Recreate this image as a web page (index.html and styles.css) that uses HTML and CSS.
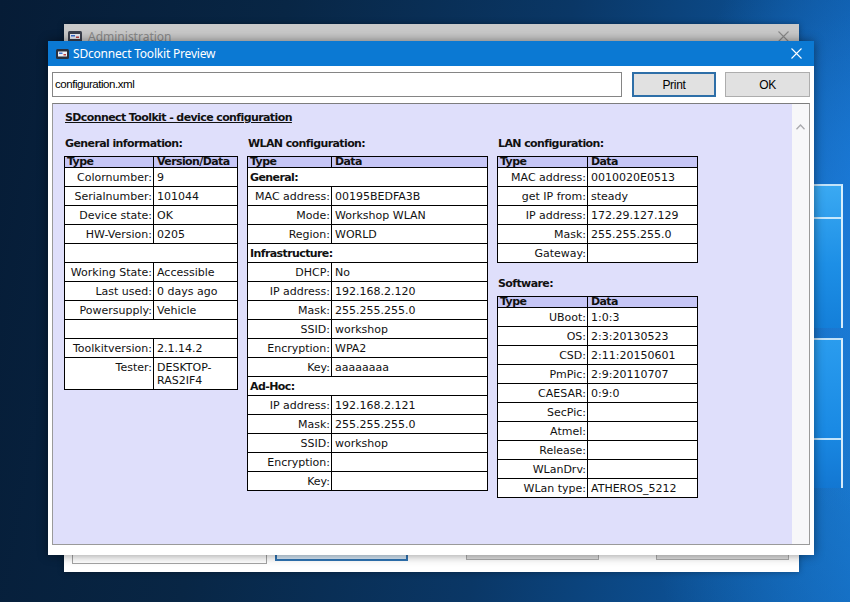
FILE: index.html
```html
<!DOCTYPE html>
<html>
<head>
<meta charset="utf-8">
<title>SDconnect Toolkit Preview</title>
<link rel="stylesheet" href="styles.css">
</head>
<body>
<div class="desktop">
  <div class="logo-pane pane-top"></div>
  <div class="logo-pane pane-bottom"></div>

  <div class="win win-back">
    <div class="titlebar back-bar">
      <svg class="app-icon" width="14" height="11" viewBox="0 0 14 11"><rect x="0" y="0" width="14" height="11" rx="1.5" fill="#3a3f4c"/><rect x="2" y="3" width="10" height="5" fill="#e8ecf4"/><rect x="3" y="4" width="4" height="1.5" fill="#3d6fd0"/><rect x="8" y="5.5" width="3" height="1.5" fill="#c04040"/></svg>
      <span class="title-text">Administration</span>
      <svg class="close" width="11" height="11" viewBox="0 0 11 11"><path d="M0.5 0.5 L10.5 10.5 M10.5 0.5 L0.5 10.5" stroke="#8a8a8a" stroke-width="1.1"/></svg>
    </div>
    <div class="back-body">
      <div class="back-row">
        <div class="back-input"></div>
        <div class="back-btn back-btn-focus"></div>
        <div class="back-btn back-btn-3"></div>
        <div class="back-btn back-btn-4"></div>
      </div>
    </div>
  </div>

  <div class="win win-front">
    <div class="titlebar front-bar">
      <svg class="app-icon" width="13" height="10" viewBox="0 0 13 10"><rect x="0" y="0" width="13" height="10" rx="1.5" fill="#2a2f3c"/><rect x="2" y="2.5" width="9" height="5" fill="#eef1f6"/><rect x="3" y="3.5" width="3.5" height="1.5" fill="#3d6fd0"/><rect x="7.5" y="5" width="2.5" height="1.5" fill="#c04040"/></svg>
      <span class="title-text">SDconnect Toolkit Preview</span>
      <svg class="close" width="11" height="11" viewBox="0 0 11 11"><path d="M0.5 0.5 L10.5 10.5 M10.5 0.5 L0.5 10.5" stroke="#ffffff" stroke-width="1.1"/></svg>
    </div>
    <div class="toolbar">
      <div class="filebox">configuration.xml</div>
      <div class="btn btn-focus">Print</div>
      <div class="btn btn-ok">OK</div>
    </div>
    <div class="viewer">
      <div class="page">
        <div class="doc-title">SDconnect Toolkit - device configuration</div>
        <div class="columns">
          <div class="col col-gen">
            <div class="sec-title">General information:</div>
            <table class="tbl">
              <colgroup><col class="c-89"><col></colgroup>
              <tr class="head"><th>Type</th><th class="th-data">Version/Data</th></tr>
              <tr><td class="lbl">Colornumber:</td><td>9</td></tr>
              <tr><td class="lbl">Serialnumber:</td><td>101044</td></tr>
              <tr><td class="lbl">Device state:</td><td>OK</td></tr>
              <tr><td class="lbl">HW-Version:</td><td>0205</td></tr>
              <tr><td class="empty" colspan="2"></td></tr>
              <tr><td class="lbl">Working State:</td><td>Accessible</td></tr>
              <tr><td class="lbl">Last used:</td><td>0 days ago</td></tr>
              <tr><td class="lbl">Powersupply:</td><td>Vehicle</td></tr>
              <tr><td class="empty" colspan="2"></td></tr>
              <tr><td class="lbl">Toolkitversion:</td><td>2.1.14.2</td></tr>
              <tr><td class="lbl">Tester:</td><td>DESKTOP-<br>RAS2IF4</td></tr>
            </table>
          </div>
          <div class="col col-wlan">
            <div class="sec-title">WLAN configuration:</div>
            <table class="tbl">
              <colgroup><col class="c-84"><col></colgroup>
              <tr class="head"><th>Type</th><th class="th-data">Data</th></tr>
              <tr><td class="grp" colspan="2">General:</td></tr>
              <tr><td class="lbl">MAC address:</td><td>00195BEDFA3B</td></tr>
              <tr><td class="lbl">Mode:</td><td>Workshop WLAN</td></tr>
              <tr><td class="lbl">Region:</td><td>WORLD</td></tr>
              <tr><td class="grp" colspan="2">Infrastructure:</td></tr>
              <tr><td class="lbl">DHCP:</td><td>No</td></tr>
              <tr><td class="lbl">IP address:</td><td>192.168.2.120</td></tr>
              <tr><td class="lbl">Mask:</td><td>255.255.255.0</td></tr>
              <tr><td class="lbl">SSID:</td><td>workshop</td></tr>
              <tr><td class="lbl">Encryption:</td><td>WPA2</td></tr>
              <tr><td class="lbl">Key:</td><td>aaaaaaaa</td></tr>
              <tr><td class="grp" colspan="2">Ad-Hoc:</td></tr>
              <tr><td class="lbl">IP address:</td><td>192.168.2.121</td></tr>
              <tr><td class="lbl">Mask:</td><td>255.255.255.0</td></tr>
              <tr><td class="lbl">SSID:</td><td>workshop</td></tr>
              <tr><td class="lbl">Encryption:</td><td></td></tr>
              <tr><td class="lbl">Key:</td><td></td></tr>
            </table>
          </div>
          <div class="col col-lan">
            <div class="sec-title">LAN configuration:</div>
            <table class="tbl">
              <colgroup><col class="c-90"><col></colgroup>
              <tr class="head"><th>Type</th><th class="th-data">Data</th></tr>
              <tr><td class="lbl">MAC address:</td><td>0010020E0513</td></tr>
              <tr><td class="lbl">get IP from:</td><td>steady</td></tr>
              <tr><td class="lbl">IP address:</td><td>172.29.127.129</td></tr>
              <tr><td class="lbl">Mask:</td><td>255.255.255.0</td></tr>
              <tr><td class="lbl">Gateway:</td><td></td></tr>
            </table>
            <div class="sec-title sec-soft">Software:</div>
            <table class="tbl">
              <colgroup><col class="c-90"><col></colgroup>
              <tr class="head"><th>Type</th><th class="th-data">Data</th></tr>
              <tr><td class="lbl">UBoot:</td><td>1:0:3</td></tr>
              <tr><td class="lbl">OS:</td><td>2:3:20130523</td></tr>
              <tr><td class="lbl">CSD:</td><td>2:11:20150601</td></tr>
              <tr><td class="lbl">PmPic:</td><td>2:9:20110707</td></tr>
              <tr><td class="lbl">CAESAR:</td><td>0:9:0</td></tr>
              <tr><td class="lbl">SecPic:</td><td></td></tr>
              <tr><td class="lbl">Atmel:</td><td></td></tr>
              <tr><td class="lbl">Release:</td><td></td></tr>
              <tr><td class="lbl">WLanDrv:</td><td></td></tr>
              <tr><td class="lbl">WLan type:</td><td>ATHEROS_5212</td></tr>
            </table>
          </div>
        </div>
      </div>
      <div class="scrollbar">
        <svg class="chev" width="9" height="6" viewBox="0 0 9 6"><path d="M0.5 5.2 L4.5 1 L8.5 5.2" fill="none" stroke="#a9a9ad" stroke-width="1.3"/></svg>
      </div>
    </div>
  </div>
</div>
</body>
</html>
```

FILE: styles.css
```css
html, body {
  margin: 0;
  padding: 0;
}
body {
  width: 850px;
  height: 602px;
  overflow: hidden;
  background: #082848;
}
.desktop {
  position: relative;
  width: 850px;
  height: 602px;
  overflow: hidden;
  background:
    radial-gradient(ellipse 200px 320px at 880px 200px, rgba(30,130,230,0.75), rgba(30,130,230,0) 100%),
    radial-gradient(ellipse 260px 420px at 900px 420px, rgba(40,150,240,0.55), rgba(40,150,240,0) 100%),
    linear-gradient(100deg, #061c36 0%, #082645 30%, #0a3766 60%, #0c4f92 82%, #0e61b4 100%);
}

/* Windows logo panes at the right edge of the desktop */
.logo-pane {
  position: absolute;
  left: 812px;
  width: 29px;
  border-top: 2px solid rgba(225,244,255,0.85);
  border-right: 2px solid rgba(235,248,255,0.9);
  background: linear-gradient(180deg, #3aa9f2 0%, #1d8fe6 55%, #147fd9 100%);
}
.logo-pane::after {
  content: "";
  position: absolute;
  left: 0;
  right: 0;
  height: 2px;
  background: rgba(225,245,255,0.85);
}
.pane-top {
  top: 184px;
  height: 142px;
}
.pane-top::after {
  top: 31px;
}
.pane-bottom {
  top: 338px;
  height: 148px;
  background: linear-gradient(180deg, #2a9cee 0%, #1a8ae4 60%, #1377d2 100%);
}
.pane-bottom::after {
  top: 98px;
}

/* Windows */
.win {
  position: absolute;
  display: flex;
  flex-direction: column;
  background: #ffffff;
  font-family: "Noto Sans", "DejaVu Sans", sans-serif;
}
.win-back {
  left: 64px;
  top: 24px;
  width: 735px;
  height: 548px;
  box-shadow: 0 0 6px rgba(0,0,0,0.35);
}
.win-front {
  left: 48px;
  top: 41px;
  width: 766px;
  height: 514px;
  box-shadow: 0 0 10px rgba(0,0,0,0.45);
}

.titlebar {
  display: flex;
  align-items: center;
  flex: none;
  font-size: 12px;
}
.back-bar {
  height: 24px;
  background: #c9c9c9;
  color: #8a8a8a;
  padding: 0 0 0 4px;
}
.back-bar .title-text {
  margin-left: 6px;
}
.back-bar .close {
  margin-left: auto;
  margin-right: 10px;
}
.front-bar {
  height: 25px;
  background: #0b79d3;
  color: #ffffff;
  padding-left: 8px;
}
.front-bar .title-text {
  margin-left: 4px;
  letter-spacing: -0.2px;
}
.front-bar .close {
  margin-left: auto;
  margin-right: 12px;
}

.back-body {
  flex: 1;
  display: flex;
  flex-direction: column;
  justify-content: flex-end;
}
.back-row {
  display: flex;
  align-items: flex-start;
  padding-left: 8px;
  margin-bottom: 8px;
}
.back-input {
  width: 193px;
  height: 24px;
  border: 1px solid #a4a4a4;
  background: #ffffff;
}
.back-btn {
  width: 131px;
  height: 20px;
  border: 1px solid #adadad;
  background: #e1e1e1;
}
.back-btn-focus {
  margin-left: 8px;
  border: 2px solid #2f73b3;
  width: 129px;
  height: 19px;
  background: #d6e8f7;
}
.back-btn-3 {
  margin-left: 58px;
}
.back-btn-4 {
  margin-left: 57px;
}

/* Toolbar */
.toolbar {
  display: flex;
  align-items: flex-start;
  padding: 6px 0 0 4px;
  flex: none;
}
.filebox {
  box-sizing: border-box;
  width: 570px;
  height: 25px;
  border: 1px solid #858585;
  background: #ffffff;
  font-family: "Liberation Sans", Arial, sans-serif;
  font-size: 11.5px;
  letter-spacing: -0.45px;
  line-height: 23px;
  padding-left: 2px;
  color: #000000;
}
.btn {
  box-sizing: border-box;
  height: 25px;
  background: #e1e1e1;
  border: 1px solid #adadad;
  font-family: "Liberation Sans", Arial, sans-serif;
  font-size: 12px;
  letter-spacing: -0.3px;
  color: #000000;
  display: flex;
  align-items: center;
  justify-content: center;
}
.btn-focus {
  width: 84px;
  margin-left: 10px;
  border: 2px solid #2e6fa8;
}
.btn-ok {
  width: 85px;
  margin-left: 9px;
}

/* Viewer */
.viewer {
  display: flex;
  margin: 6px 0 0 4px;
  width: 758px;
  height: 442px;
  box-sizing: border-box;
  border: 1px solid #9a9a9a;
  border-top-color: #7d7d7d;
}
.page {
  flex: 1;
  background: #dfdffb;
  padding: 7px 0 0 11px;
  font-family: "DejaVu Sans", Verdana, sans-serif;
  font-size: 11px;
  color: #111111;
  overflow: hidden;
}
.scrollbar {
  width: 17px;
  background: #f7f7f9;
  display: flex;
  justify-content: center;
  padding-top: 20px;
  box-sizing: border-box;
}
.chev {
  display: block;
}

.doc-title {
  font-weight: bold;
  text-decoration: underline;
  line-height: 13px;
  margin-left: 1px;
  letter-spacing: -0.6px;
}
.columns {
  display: flex;
  align-items: flex-start;
  gap: 9px;
  margin-top: 13px;
}
.col-gen { width: 174px; }
.col-wlan { width: 241px; }
.col-lan { width: 201px; }

.sec-title {
  font-weight: bold;
  line-height: 13px;
  margin: 0 0 6px 1px;
  letter-spacing: -0.6px;
}
.sec-soft {
  margin-top: 14px;
}

.tbl {
  border-collapse: collapse;
  table-layout: fixed;
  width: 100%;
  background: #ffffff;
  border: 1px solid #000000;
}
.c-89 { width: 89px; }
.c-84 { width: 84px; }
.c-90 { width: 90px; }
.tbl th,
.tbl td {
  border: 1px solid #000000;
  padding: 3px 1px 2px 3px;
  line-height: 13px;
  height: 13px;
  text-align: left;
  vertical-align: top;
  font-weight: normal;
  white-space: nowrap;
}
.tbl tr.head th {
  background: #c6c6f6;
  font-weight: bold;
  letter-spacing: -0.6px;
  padding: 0 1px 0 2px;
  line-height: 10px;
  height: 10px;
}
.tbl tr.head th.th-data {
  padding-left: 3px;
}
.tbl td.lbl {
  text-align: right;
  padding-left: 2px;
  padding-right: 1px;
}
.tbl td.grp {
  font-weight: bold;
  letter-spacing: -0.6px;
  padding-left: 2px;
}
.tbl td.empty {
  height: 13px;
}
```
